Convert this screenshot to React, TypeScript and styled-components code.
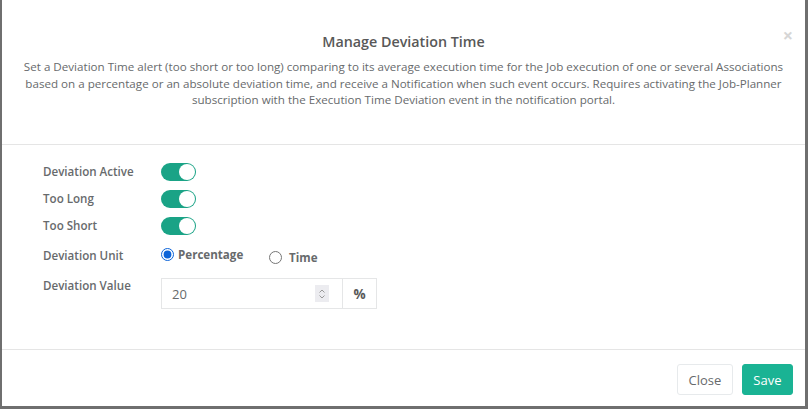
import React, { useState } from "react";
import styled, { createGlobalStyle } from "styled-components";

const Global = createGlobalStyle`
  html, body { margin: 0; padding: 0; background: #6f6f6f; }
  body { font-family: "Open Sans", "Liberation Sans", sans-serif; }
  * { box-sizing: border-box; }
`;

const Backdrop = styled.div`
  width: 808px;
  height: 409px;
  display: flex;
  align-items: flex-start;
  padding-left: 2px;
  background: #6f6f6f;
`;

const Modal = styled.div`
  position: relative;
  width: 803px;
  height: 406px;
  background: #fff;
  display: flex;
  flex-direction: column;
  color: #676a6c;
`;

const Header = styled.div`
  height: 145px;
  border-bottom: 1px solid #e5e5e5;
  padding: 32px 14px 0;
  text-align: center;
`;

const Title = styled.h4`
  margin: 0 0 7px;
  font-size: 14.3px;
  font-weight: 600;
  color: #585858;
  line-height: 20px;
`;

const Description = styled.p`
  margin: 0;
  font-size: 11.62px;
  line-height: 16.5px;
  color: #676a6c;
`;

const CloseX = styled.button`
  position: absolute;
  top: 26px;
  right: 12px;
  border: none;
  background: none;
  padding: 0;
  font-size: 18px;
  font-weight: 700;
  line-height: 18px;
  color: #d6d6d6;
  font-family: "Open Sans", sans-serif;
`;

const Body = styled.div`
  flex: 1;
  padding: 13px 0 0 41px;
  display: flex;
  flex-direction: column;
`;

const Row = styled.div<{ $h: number; $top?: boolean }>`
  display: flex;
  align-items: ${(p) => (p.$top ? "flex-start" : "center")};
  padding-top: ${(p) => (p.$top ? 5 : 0)}px;
  height: ${(p) => p.$h}px;
`;

const Label = styled.label`
  width: 118px;
  font-size: 11.6px;
  line-height: 16px;
  font-weight: 600;
  color: #676a6c;
`;

const Track = styled.span`
  width: 35px;
  height: 18px;
  border-radius: 9px;
  background: #1aa386;
  position: relative;
  display: inline-block;
`;

const Knob = styled.span`
  position: absolute;
  right: 1px;
  top: 1px;
  width: 16px;
  height: 16px;
  border-radius: 50%;
  background: #fff;
`;

const RadioGroup = styled.div`
  display: flex;
  align-items: center;
`;

const RadioItem = styled.label<{ $w: number; $shift: number }>`
  width: ${(p) => p.$w}px;
  display: flex;
  align-items: center;
  gap: 4px;
  font-size: 11.6px;
  font-weight: 700;
  color: #676a6c;
  position: relative;
  top: ${(p) => p.$shift}px;
`;

const Radio = styled.input`
  margin: 0;
  width: 13px;
  height: 13px;
  accent-color: #0b63d8;
`;

const InputGroup = styled.div`
  display: flex;
  height: 31px;
`;

const NumberBox = styled.div`
  width: 182px;
  border: 1px solid #e5e6e7;
  display: flex;
  align-items: center;
  padding: 0 13px 0 10px;
  font-size: 13px;
  color: #676a6c;
`;

const Value = styled.span`
  flex: 1;
`;

const Spinner = styled.span`
  width: 14px;
  height: 17px;
  background: #ececf0;
  display: flex;
  align-items: center;
  justify-content: center;
`;

const Addon = styled.div`
  width: 34px;
  border: 1px solid #e5e6e7;
  border-left: none;
  display: flex;
  align-items: center;
  justify-content: center;
  font-size: 13.5px;
  font-weight: 700;
  color: #5a5a5a;
`;

const Footer = styled.div`
  height: 57px;
  border-top: 1px solid #e5e5e5;
  display: flex;
  justify-content: flex-end;
  align-items: flex-start;
  padding: 14px 12px 0 0;
  gap: 9px;
`;

const Button = styled.button<{ $primary?: boolean }>`
  height: 31px;
  padding: 0 10.5px;
  font-family: "Open Sans", sans-serif;
  font-size: 13px;
  border-radius: 3px;
  border: 1px solid ${(p) => (p.$primary ? "#1ab394" : "#e7eaec")};
  background: ${(p) => (p.$primary ? "#1ab394" : "#fff")};
  color: ${(p) => (p.$primary ? "#fff" : "#676a6c")};
`;

const Toggle = () => (
  <Track>
    <Knob />
  </Track>
);

export default function App() {
  const [unit, setUnit] = useState("percentage");
  return (
    <>
      <Global />
      <Backdrop>
        <Modal>
          <CloseX>×</CloseX>
          <Header>
            <Title>Manage Deviation Time</Title>
            <Description>
              Set a Deviation Time alert (too short or too long) comparing to its average execution time for the Job execution of one or several Associations based on a percentage or an absolute deviation time, and receive a Notification when such event occurs. Requires activating the Job-Planner subscription with the Execution Time Deviation event in the notification portal.
            </Description>
          </Header>
          <Body>
            <Row $h={27}>
              <Label>Deviation Active</Label>
              <Toggle />
            </Row>
            <Row $h={27}>
              <Label>Too Long</Label>
              <Toggle />
            </Row>
            <Row $h={27}>
              <Label>Too Short</Label>
              <Toggle />
            </Row>
            <Row $h={34}>
              <Label>Deviation Unit</Label>
              <RadioGroup>
                <RadioItem $w={108} $shift={-2}>
                  <Radio type="radio" checked={unit === "percentage"} onChange={() => setUnit("percentage")} />
                  Percentage
                </RadioItem>
                <RadioItem $w={60} $shift={1}>
                  <Radio type="radio" checked={unit === "time"} onChange={() => setUnit("time")} />
                  &nbsp;Time
                </RadioItem>
              </RadioGroup>
            </Row>
            <Row $h={40} $top>
              <Label>Deviation Value</Label>
              <InputGroup>
                <NumberBox>
                  <Value>20</Value>
                  <Spinner>
                    <svg width="8" height="12" viewBox="0 0 8 12" fill="none" stroke="#9a9a9a" strokeWidth="1">
                      <path d="M1.5 4.5 L4 2 L6.5 4.5" />
                      <path d="M1.5 7.5 L4 10 L6.5 7.5" />
                    </svg>
                  </Spinner>
                </NumberBox>
                <Addon>%</Addon>
              </InputGroup>
            </Row>
          </Body>
          <Footer>
            <Button>Close</Button>
            <Button $primary>Save</Button>
          </Footer>
        </Modal>
      </Backdrop>
    </>
  );
}
